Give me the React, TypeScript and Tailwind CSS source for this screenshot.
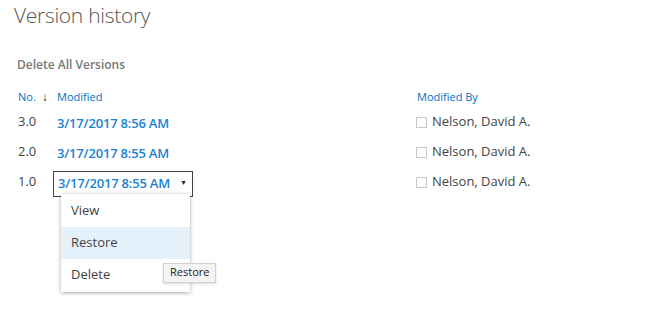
import React from 'react';

const rows = [
  { no: '3.0', date: '3/17/2017 8:56 AM', by: 'Nelson, David A.' },
  { no: '2.0', date: '3/17/2017 8:55 AM', by: 'Nelson, David A.' },
  { no: '1.0', date: '3/17/2017 8:55 AM', by: 'Nelson, David A.', open: true },
];

export default function App() {
  return (
    <div
      className="w-[661px] h-[317px] bg-white text-[#444] overflow-hidden"
      style={{ fontFamily: '"Open Sans", "Noto Sans", sans-serif' }}
    >
      <h1 className="pl-[14px] text-[21px] leading-[30px] font-light tracking-[-0.3px] text-[#555]">
        Version history
      </h1>

      <div className="pl-[17px] mt-[23px] text-[12px] leading-[24px] font-semibold text-[#777]">
        Delete All Versions
      </div>

      <div className="mt-[10px] pl-[18px]">
        <div className="grid grid-cols-[39px_359px_1fr] h-[20px] items-center text-[11px] text-[#0072c6]">
          <div className="flex items-center gap-[6px]">
            No.
            <span className="text-[#222] text-[12px] font-semibold">↓</span>
          </div>
          <div>Modified</div>
          <div className="pl-[1px]">Modified By</div>
        </div>

        {rows.map((r, i) => (
          <div key={i} className="grid grid-cols-[39px_359px_1fr] h-[30px] items-center">
            <div className="text-[13px] text-[#444]">{r.no}</div>
            <div className="relative">
              {r.open ? (
                <div className="relative -ml-[4px] w-[140px] h-[26px] border border-[#444] flex items-center pl-[4px] mt-[3px]">
                  <span className="text-[13px] font-semibold tracking-[-0.2px] text-[#1a82d4]">{r.date}</span>
                  <span className="ml-auto mr-[5px] text-[7px] text-[#222]">▼</span>
                  <div className="absolute left-[7px] top-[22px] w-[129px] bg-white shadow-[0_1px_4px_rgba(0,0,0,0.35)] z-10 py-[1px] text-[13px] text-[#444]">
                    <div className="h-[32px] flex items-center pl-[10px]">View</div>
                    <div className="h-[32px] flex items-center pl-[10px] bg-[#e6f2fb]">Restore</div>
                    <div className="h-[32px] flex items-center pl-[10px]">Delete</div>
                  </div>
                  <div className="absolute left-[109px] top-[91px] z-20 h-[20px] px-[6px] flex items-center bg-[#f4f4f4] border border-[#d0d0d0] text-[11px] text-[#222] shadow-[0_1px_2px_rgba(0,0,0,0.15)]">
                    Restore
                  </div>
                </div>
              ) : (
                <span className="text-[13px] font-semibold tracking-[-0.2px] text-[#1a82d4]">{r.date}</span>
              )}
            </div>
            <div className="flex items-center gap-[5px]">
              <span className="w-[11px] h-[11px] border border-[#c8c8c8]" />
              <span className="text-[13px] text-[#444]">{r.by}</span>
            </div>
          </div>
        ))}
      </div>
    </div>
  );
}
